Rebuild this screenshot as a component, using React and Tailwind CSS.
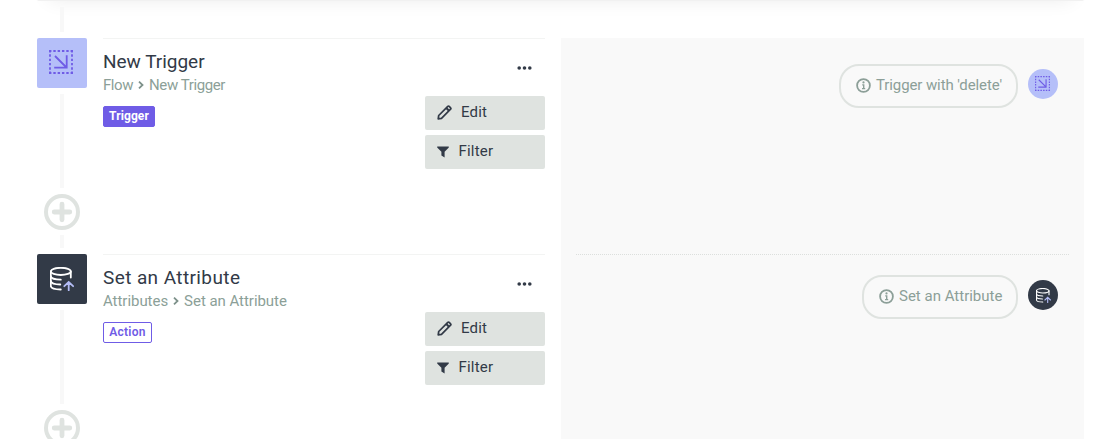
import { clsx } from "clsx";

const steps = [
  {
    id: "trigger",
    name: "New Trigger",
    group: "Flow",
    kind: "Trigger",
    summary: "Trigger with 'delete'",
    titleClass: "tracking-[-0.02px]",
    pathClass: "tracking-[-0.42px]",
    pillClass: "w-[179px] tracking-[-0.1px]",
  },
  {
    id: "attribute",
    name: "Set an Attribute",
    group: "Attributes",
    kind: "Action",
    summary: "Set an Attribute",
    titleClass: "tracking-[0.4px]",
    pathClass: "tracking-[-0.04px]",
    pillClass: "w-[156px]",
  },
];

function TriggerIcon({ className }) {
  return (
    <svg className={className} viewBox="0 0 24 24" fill="none" stroke="#6f5ce6">
      <path d="M0 1h24M0 23h24M1 0v24M23 0v24" strokeWidth="1.8" strokeDasharray="2.4 1.92" strokeDashoffset="0" />
      <path d="M6 6l11.5 11.5M17.7 5.2V17.7H5.2" strokeWidth="1.8" />
    </svg>
  );
}

function AttributeIcon({ className }) {
  return (
    <svg className={className} viewBox="0 0 24 24" fill="none" strokeLinecap="round">
      <g stroke="#fff" strokeWidth="1.8">
        <ellipse cx="10.8" cy="4.4" rx="10" ry="3.6" />
        <path d="M.8 4.4v14.6c0 2 4 3.4 10 3.5M20.8 4.4v6.2" />
        <path d="M.8 9.2c0 2 4.2 3.5 10 3.5M.8 14c0 2 4 3.5 9.5 3.5" />
      </g>
      <path d="M18.7 23.3v-8M14.3 19.2l4.4-4.2 4.4 4.2" stroke="#b3bcf5" strokeWidth="1.8" />
    </svg>
  );
}

function StepIcon({ kind, small }) {
  if (kind === "Trigger") {
    return <TriggerIcon className={small ? "-mt-px -ml-px size-[15px]" : "-mt-0.5 -ml-0.5 size-6"} />;
  }
  return <AttributeIcon className={small ? "size-[15px]" : "size-6"} />;
}

function PlusIcon() {
  return (
    <svg className="block size-9 shrink-0" viewBox="0 0 36 36" fill="none" stroke="#dfe3e0" strokeWidth="4">
      <circle cx="18" cy="18" r="16" />
      <path d="M18 10.2v15.6M10.2 18h15.6" strokeWidth="4.8" strokeLinecap="round" />
    </svg>
  );
}

function InfoIcon() {
  return (
    <svg className="size-[15px] shrink-0" viewBox="0 0 15 15" fill="none" stroke="#8c9f98">
      <circle cx="7.5" cy="7.5" r="6.4" strokeWidth="1.8" />
      <path d="M6.2 6.9h1.5v3.600M6 10.6h3.200" strokeWidth="1.4" />
      <circle cx="7.5" cy="4.4" r="1.1" fill="#8c9f98" stroke="none" />
    </svg>
  );
}

function PencilIcon() {
  return (
    <svg className="size-[15px] shrink-0" viewBox="0 0 15 15" fill="none" stroke="#323a47" strokeWidth="1.7" strokeLinejoin="round">
      <path d="M1.2 13.8l.5-3.3L10.8 1.4q.7-.7 1.4 0l1.4 1.4q.7.7 0 1.4L4.5 13.3z" />
      <path d="M9.3 3l2.7 2.7" strokeWidth="2" />
    </svg>
  );
}

function FilterIcon() {
  return (
    <svg className="h-[12px] w-[12px] shrink-0" viewBox="0 0 12 12" fill="#323a47">
      <path d="M.4.5h11.2q.6.6 0 1.2L7.6 5.7V11.5L4.4 9.5V5.7L.4 1.7Q-.2 1.1.4.5z" />
    </svg>
  );
}

function Timeline({ kind }) {
  return (
    <div className="flex w-[50px] shrink-0 flex-col items-center">
      <div
        className={clsx(
          "flex size-[50px] shrink-0 items-center justify-center rounded-[2px]",
          kind === "Trigger" ? "bg-[#b5bff9]" : "bg-[#323a47]"
        )}
      >
        <StepIcon kind={kind} />
      </div>
      <div className="mt-1.5 h-[94px] w-1 shrink-0 bg-[#f8f8f8]" />
      <div className="mt-1.5">
        <PlusIcon />
      </div>
      <div className="mt-[5px] h-[13px] w-1 shrink-0 bg-[#f8f8f8]" />
    </div>
  );
}

function Step({ step }) {
  return (
    <div className="flex h-[216px] gap-4">
      <Timeline kind={step.kind} />

      <div className="flex w-[442px] justify-between border-t border-[#f3f4f3]">
        <div className="pt-[11px]">
          <h3 className={clsx("text-[19px] leading-6 font-[450] text-[#323a47]", step.titleClass)}>{step.name}</h3>
          <p className={clsx("flex items-center text-[15px] leading-[22px] text-[#8c9f98]", step.pathClass)}>
            {step.group}
            <svg className="mx-[5px] h-2 w-[6px]" viewBox="0 0 6 8" fill="none" stroke="#7d918a" strokeWidth="1.8">
              <path d="M1 .7L4.5 4 1 7.3" />
            </svg>
            {step.name}
          </p>
          <span
            className={clsx(
              "mt-2.5 flex h-[21px] items-center justify-center rounded-[2px] border border-[#6f5ce6] pb-px text-[12px]",
              step.kind === "Trigger"
                ? "w-[52px] bg-[#6f5ce6] font-bold tracking-[0.1px] text-white"
                : "w-[49px] font-semibold tracking-[0.25px] text-[#6f5ce6]"
            )}
          >
            {step.kind}
          </span>
        </div>

        <div className="flex w-[120px] flex-col text-[15px] tracking-[0.2px] text-[#323a47]">
          <button type="button" className="mt-[27px] mr-[13px] flex h-1 justify-end">
            <svg className="h-1 w-[15px]" viewBox="0 0 15 4" fill="#323a47">
              <circle cx="2.2" cy="2" r="1.8" />
              <circle cx="7.5" cy="2" r="1.8" />
              <circle cx="12.8" cy="2" r="1.8" />
            </svg>
          </button>
          <button type="button" className="mt-[26px] flex h-[34px] items-center rounded-[2px] bg-[#dfe3e0] pb-px pl-3">
            <PencilIcon />
            <span className="ml-[9px]">Edit</span>
          </button>
          <button type="button" className="mt-[5px] flex h-[34px] items-center rounded-[2px] bg-[#dfe3e0] pb-px pl-3">
            <FilterIcon />
            <span className="ml-[9.5px]">Filter</span>
          </button>
        </div>
      </div>

      <div className="w-[523px] bg-[#f9f9f9]">
        <div
          className={clsx(
            "mr-[15px] ml-[15px] flex items-start justify-end gap-2.5 pr-[11px]",
            step.kind === "Trigger" ? "pt-[26px]" : "border-t border-dotted border-[#dcdfdd] pt-5"
          )}
        >
          <div
            className={clsx(
              "flex h-11 items-center rounded-[20px] border-2 border-[#dfe3e0] pb-[2px] pl-[14.5px] text-[15px] whitespace-nowrap text-[#8c9f98]",
              step.pillClass
            )}
          >
            <InfoIcon />
            <span className="ml-[5.5px]">{step.summary}</span>
          </div>
          <div
            className={clsx(
              "mt-[5px] flex size-[30px] items-center justify-center rounded-full",
              step.kind === "Trigger" ? "bg-[#b5bff9]" : "bg-[#323a47]"
            )}
          >
            <StepIcon kind={step.kind} small />
          </div>
        </div>
      </div>
    </div>
  );
}

export default function App() {
  return (
    <div className="h-[439px] w-[1110px] overflow-hidden bg-white pr-[26px] pl-[37px] font-[Roboto,sans-serif]">
      {/* bottom edge of the panel above */}
      <div className="-mt-[59px] h-[60px] rounded-b-[2px] border-b border-[#f1f1f1] bg-white shadow-[0_10px_20px_-12px_rgba(0,0,0,0.09)]" />
      <div className="mt-1.5 mb-1.5 ml-[23px] h-[25px] w-1 bg-[#f8f8f8]" />
      {steps.map((step) => (
        <Step key={step.id} step={step} />
      ))}
    </div>
  );
}
